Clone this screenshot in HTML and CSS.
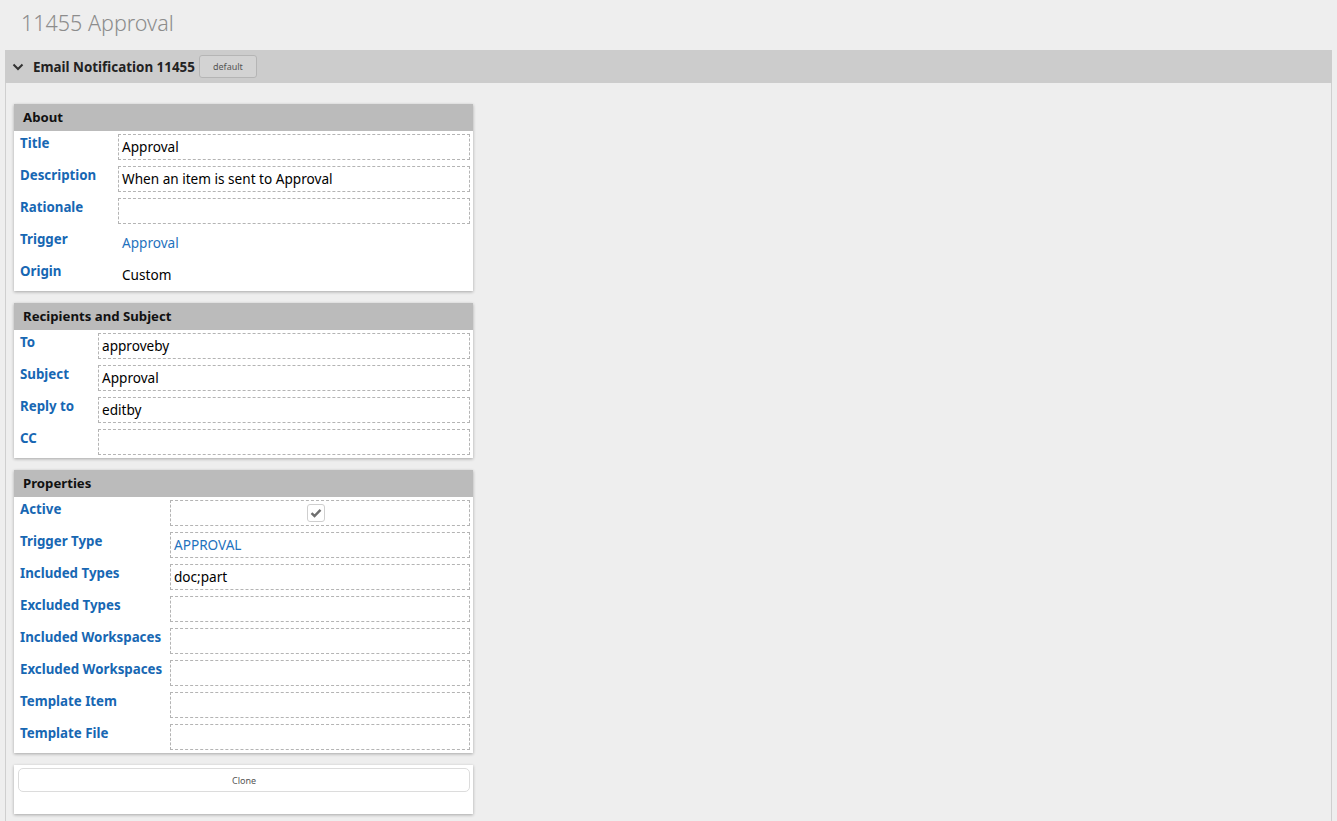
FILE: index.html
```html
<!DOCTYPE html>
<html lang="en">
<head>
<meta charset="UTF-8">
<title>11455 Approval</title>
<link rel="stylesheet" href="styles.css">
</head>
<body>
<h1 class="page-title">11455 Approval</h1>

<div class="panel">
  <div class="panel-head">
    <svg class="chevron" width="12" height="8" viewBox="0 0 12 8"><path d="M1.5 1.5 L6 6 L10.5 1.5" fill="none" stroke="#333" stroke-width="2"/></svg>
    <span class="panel-title">Email Notification 11455</span>
    <button class="tag-btn">default</button>
  </div>

  <div class="panel-body">
    <div class="card about">
      <div class="card-head">About</div>
      <div class="rows">
        <div class="label">Title</div><div class="field">Approval</div>
        <div class="label">Description</div><div class="field">When an item is sent to Approval</div>
        <div class="label">Rationale</div><div class="field"></div>
        <div class="label">Trigger</div><div class="value link">Approval</div>
        <div class="label">Origin</div><div class="value">Custom</div>
      </div>
    </div>

    <div class="card recipients">
      <div class="card-head">Recipients and Subject</div>
      <div class="rows">
        <div class="label">To</div><div class="field">approveby</div>
        <div class="label">Subject</div><div class="field">Approval</div>
        <div class="label">Reply to</div><div class="field">editby</div>
        <div class="label">CC</div><div class="field"></div>
      </div>
    </div>

    <div class="card properties">
      <div class="card-head">Properties</div>
      <div class="rows">
        <div class="label">Active</div>
        <div class="field center">
          <span class="check"><svg width="12" height="10" viewBox="0 0 12 10"><path d="M1.5 5.2 L4.5 8 L10.5 1.8" fill="none" stroke="#6f6f6f" stroke-width="2.4"/></svg></span>
        </div>
        <div class="label">Trigger Type</div><div class="field link">APPROVAL</div>
        <div class="label">Included Types</div><div class="field">doc;part</div>
        <div class="label">Excluded Types</div><div class="field"></div>
        <div class="label">Included Workspaces</div><div class="field"></div>
        <div class="label">Excluded Workspaces</div><div class="field"></div>
        <div class="label">Template Item</div><div class="field"></div>
        <div class="label">Template File</div><div class="field"></div>
      </div>
    </div>

    <div class="card actions">
      <button class="clone-btn">Clone</button>
    </div>
  </div>
</div>
</body>
</html>
```

FILE: styles.css
```css
body {
  margin: 0;
  padding: 0 5px;
  background-color: #eeeeee;
  font-family: "Noto Sans", "Open Sans", Arial, sans-serif;
  font-size: 13px;
  color: #000;
}
.page-title {
  margin: 0;
  height: 50px;
  padding-left: 16px;
  font-size: 21.5px;
  font-weight: 300;
  line-height: 46px;
  color: #8c8c8c;
}
.panel {
  border-left: 1px solid #cfcfcf;
  border-right: 1px solid #cfcfcf;
  min-height: 771px;
}
.panel-head {
  display: flex;
  align-items: center;
  height: 33px;
  background-color: #cccccc;
  margin-left: -1px;
  margin-right: -1px;
  padding-left: 7px;
}
.chevron {
  margin-right: 9px;
}
.panel-title {
  font-weight: bold;
  font-size: 13.4px;
  color: #222;
}
.tag-btn {
  margin-left: 4px;
  width: 58px;
  height: 23px;
  border: 1px solid #b5b5b5;
  border-radius: 3px;
  background-color: #d3d3d3;
  font-family: inherit;
  font-size: 9px;
  color: #555;
  padding: 0;
}
.panel-body {
  padding: 21px 0 0 8px;
}
.card {
  width: 459px;
  background-color: #fff;
  box-shadow: 0 1px 3px rgba(0, 0, 0, 0.3);
  margin-bottom: 12px;
}
.card-head {
  height: 27px;
  line-height: 27px;
  padding-left: 9px;
  background-color: #bbbbbb;
  font-weight: bold;
  font-size: 13.2px;
  color: #111;
}
.rows {
  display: grid;
  grid-template-columns: 98px 1fr;
  grid-auto-rows: 26px;
  row-gap: 6px;
  padding: 3px 3px 3px 6px;
}
.recipients .rows {
  grid-template-columns: 78px 1fr;
}
.properties .rows {
  grid-template-columns: 150px 1fr;
}
.label {
  font-weight: bold;
  font-size: 13.3px;
  color: #1767b3;
  line-height: 18px;
  white-space: nowrap;
}
.field,
.value {
  border: 1px dashed #b4b4b4;
  padding: 0 3px;
  font-size: 13.6px;
  line-height: 24px;
  white-space: nowrap;
  overflow: hidden;
}
.value {
  border-color: transparent;
}
.link {
  color: #1f72bd;
}
.center {
  display: flex;
  justify-content: center;
  align-items: center;
  padding-right: 12px;
}
.check {
  display: inline-flex;
  justify-content: center;
  align-items: center;
  width: 18px;
  height: 18px;
  box-sizing: border-box;
  border: 1px solid #cfcfcf;
  border-radius: 3px;
}
.actions {
  height: 49px;
  padding: 3px 3px 0 4px;
  box-sizing: border-box;
}
.clone-btn {
  width: 100%;
  height: 24px;
  border: 1px solid #dcdcdc;
  border-radius: 5px;
  background-color: #fff;
  font-family: inherit;
  font-size: 9px;
  color: #555;
}
```
